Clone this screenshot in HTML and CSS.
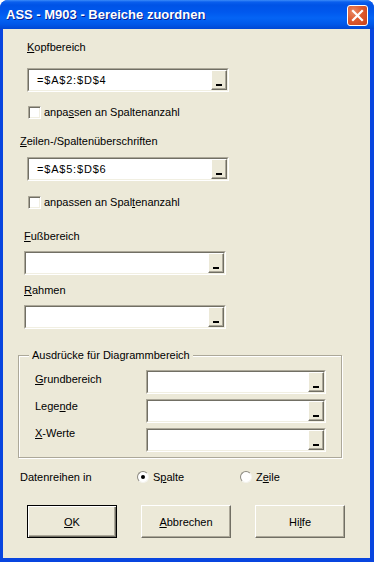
FILE: index.html
```html
<!DOCTYPE html>
<html>

<head>
   <meta name="viewport" content="width=device-width, initial-scale=1.0">
   <title>ASS - M903 - Bereiche zuordnen</title>
   <link rel="stylesheet" href="styles.css">
</head>

<body>
   <div class="window">
      <div class="titlebar">
         <span class="title">ASS - M903 - Bereiche zuordnen</span>
         <span class="close">
            <svg width="13" height="13" viewBox="0 0 13 13">
               <path d="M2 2 L11 11 M11 2 L2 11" stroke="#fff" stroke-width="2.2" stroke-linecap="square" fill="none" />
            </svg>
         </span>
      </div>

      <div class="client">
         <label class="lbl lbl-kopf"><u>K</u>opfbereich</label>
         <div class="ref ref-wide ref-kopf">
            <div class="ref-inner">
               <span class="ref-text">=$A$2:$D$4</span>
               <span class="pick"></span>
            </div>
         </div>
         <div class="check check-kopf">
            <span class="box"></span>
            <span>anpa<u>s</u>sen an Spaltenanzahl</span>
         </div>

         <label class="lbl lbl-zeilen"><u>Z</u>eilen-/Spaltenüberschriften</label>
         <div class="ref ref-wide ref-zeilen">
            <div class="ref-inner">
               <span class="ref-text">=$A$5:$D$6</span>
               <span class="pick"></span>
            </div>
         </div>
         <div class="check check-zeilen">
            <span class="box"></span>
            <span>anpassen an Spal<u>t</u>enanzahl</span>
         </div>

         <label class="lbl lbl-fuss"><u>F</u>ußbereich</label>
         <div class="ref ref-wide ref-fuss">
            <div class="ref-inner">
               <span class="ref-text"></span>
               <span class="pick"></span>
            </div>
         </div>

         <label class="lbl lbl-rahmen"><u>R</u>ahmen</label>
         <div class="ref ref-wide ref-rahmen">
            <div class="ref-inner">
               <span class="ref-text"></span>
               <span class="pick"></span>
            </div>
         </div>

         <div class="group">
            <span class="group-title">Ausdrücke für Diagrammbereich</span>
            <div class="group-body">
               <div class="group-labels">
                  <span class="lbl"><u>G</u>rundbereich</span>
                  <span class="lbl">Lege<u>n</u>de</span>
                  <span class="lbl"><u>X</u>-Werte</span>
               </div>
               <div class="group-refs">
                  <div class="ref ref-small">
                     <div class="ref-inner">
                        <span class="ref-text"></span>
                        <span class="pick"></span>
                     </div>
                  </div>
                  <div class="ref ref-small">
                     <div class="ref-inner">
                        <span class="ref-text"></span>
                        <span class="pick"></span>
                     </div>
                  </div>
                  <div class="ref ref-small">
                     <div class="ref-inner">
                        <span class="ref-text"></span>
                        <span class="pick"></span>
                     </div>
                  </div>
               </div>
            </div>
         </div>

         <div class="series">
            <span class="series-label">Datenreihen in</span>
            <span class="radio radio-spalte"><span class="dot checked"></span><span>S<u>p</u>alte</span></span>
            <span class="radio"><span class="dot"></span><span>Z<u>e</u>ile</span></span>
         </div>

         <div class="buttons">
            <button class="btn btn-default"><u>O</u>K</button>
            <button class="btn"><u>A</u>bbrechen</button>
            <button class="btn">Hi<u>l</u>fe</button>
         </div>
      </div>
   </div>
</body>

</html>
```

FILE: styles.css
```css
body {
   margin: 0;
   background: #fff;
   font-family: "Liberation Sans", Arial, sans-serif;
   font-size: 11px;
   color: #000;
}

.window {
   width: 374px;
   height: 562px;
   display: flex;
   flex-direction: column;
   background: #0845DF;
   border-radius: 8px 8px 0 0;
   overflow: hidden;
}

.titlebar {
   flex: none;
   height: 29px;
   display: flex;
   padding: 0 6px 0 6px;
   background: linear-gradient(to bottom, #3C8CF8 0px, #0A5FEE 2px, #0053E6 5px, #0058EE 12px, #0464F5 18px, #0058EA 24px, #0047D3 29px);
}

.title {
   flex: 1;
   padding-top: 7px;
   color: #fff;
   font-weight: bold;
   font-size: 13px;
   line-height: 15px;
   text-shadow: 1px 1px #0A1C8C;
}

.close {
   margin-top: 5px;
   width: 21px;
   height: 21px;
   box-sizing: border-box;
   border: 1px solid #fff;
   border-radius: 3px;
   background: radial-gradient(circle at 30% 30%, #E98A66 0%, #DD5A2E 45%, #C8401A 100%);
   display: flex;
   align-items: center;
   justify-content: center;
}

.client {
   flex: 1;
   margin: 0 4px 4px 3px;
   background: #ECE9D8;
   padding-top: 12px;
}

.lbl {
   display: block;
   line-height: 13px;
   height: 13px;
   white-space: nowrap;
}

u {
   text-underline-offset: 1px;
}

/* label / field positions */
.lbl-kopf { margin-left: 24px; }
.ref-kopf { margin: 14px 0 0 24px; }
.check-kopf { margin: 14px 0 0 25px; }
.lbl-zeilen { margin: 16px 0 0 17px; }
.ref-zeilen { margin: 9px 0 0 24px; }
.check-zeilen { margin: 15px 0 0 25px; }
.lbl-fuss { margin: 21px 0 0 21px; }
.ref-fuss { margin: 8px 0 0 21px; }
.lbl-rahmen { margin: 9px 0 0 21px; }
.ref-rahmen { margin: 8px 0 0 21px; }

/* sunken reference field with picker button */
.ref {
   box-sizing: border-box;
   height: 24px;
   border: 1px solid;
   border-color: #ACA899 #fff #fff #ACA899;
}

.ref-wide {
   width: 202px;
}

.ref-small {
   width: 180px;
}

.ref-inner {
   height: 100%;
   box-sizing: border-box;
   display: flex;
   background: #fff;
   border: 1px solid;
   border-color: #716F64 #F1EFE2 #F1EFE2 #716F64;
}

.ref-text {
   flex: 1;
   padding-left: 8px;
   line-height: 20px;
   letter-spacing: 0.8px;
}

.pick {
   width: 16px;
   box-sizing: border-box;
   background: #ECE9D8;
   border: 1px solid;
   border-color: #fff #716F64 #716F64 #fff;
   box-shadow: inset -1px -1px #ACA899;
   display: flex;
   align-items: flex-end;
   justify-content: center;
   padding-bottom: 3px;
}

.pick::after {
   content: "";
   width: 6px;
   height: 2px;
   background: #000;
}

/* checkbox */
.check {
   display: flex;
   align-items: center;
   gap: 3px;
   height: 13px;
   line-height: 13px;
}

.box {
   width: 13px;
   height: 13px;
   box-sizing: border-box;
   background: #fff;
   border: 1px solid;
   border-color: #ACA899 #fff #fff #ACA899;
   box-shadow: inset 1px 1px #716F64, inset -1px -1px #F1EFE2;
}

/* group box */
.group {
   margin: 26px 0 0 15px;
   width: 324px;
   box-sizing: border-box;
   border: 1px solid #ACA899;
   box-shadow: inset 1px 1px #fff, 1px 1px #fff;
   padding-bottom: 5px;
}

.group-title {
   display: table;
   margin: -7px 0 0 10px;
   padding: 0 3px;
   background: #ECE9D8;
   line-height: 13px;
}

.group-body {
   display: flex;
   margin-top: 8px;
}

.group-labels {
   width: 111px;
   padding: 3px 0 0 16px;
   display: flex;
   flex-direction: column;
   gap: 14px;
}

.group-refs {
   display: flex;
   flex-direction: column;
   gap: 5px;
}

/* option row */
.series {
   display: flex;
   align-items: center;
   margin: 12px 0 0 17px;
   height: 13px;
}

.series-label {
   width: 117px;
}

.radio {
   display: flex;
   align-items: center;
   gap: 4px;
}

.radio-spalte {
   width: 103px;
}

.dot {
   width: 12px;
   height: 12px;
   box-sizing: border-box;
   border-radius: 50%;
   background: #fff;
   border: 1px solid;
   border-color: #8C8A80 #F4F3EE #F4F3EE #8C8A80;
   display: flex;
   align-items: center;
   justify-content: center;
}

.dot.checked::after {
   content: "";
   width: 4px;
   height: 4px;
   border-radius: 50%;
   background: #000;
}

/* command buttons */
.buttons {
   display: flex;
   gap: 24px;
   margin: 22px 0 0 24px;
}

.btn {
   width: 90px;
   height: 33px;
   box-sizing: border-box;
   padding: 0;
   font-family: inherit;
   font-size: 11px;
   color: #000;
   background: #ECE9D8;
   border: 1px solid;
   border-color: #fff #716F64 #716F64 #fff;
   box-shadow: inset -1px -1px #ACA899;
}

.btn-default {
   border: 1px solid #000;
   box-shadow: inset 1px 1px #fff, inset -1px -1px #716F64, inset -2px -2px #ACA899;
}
```
